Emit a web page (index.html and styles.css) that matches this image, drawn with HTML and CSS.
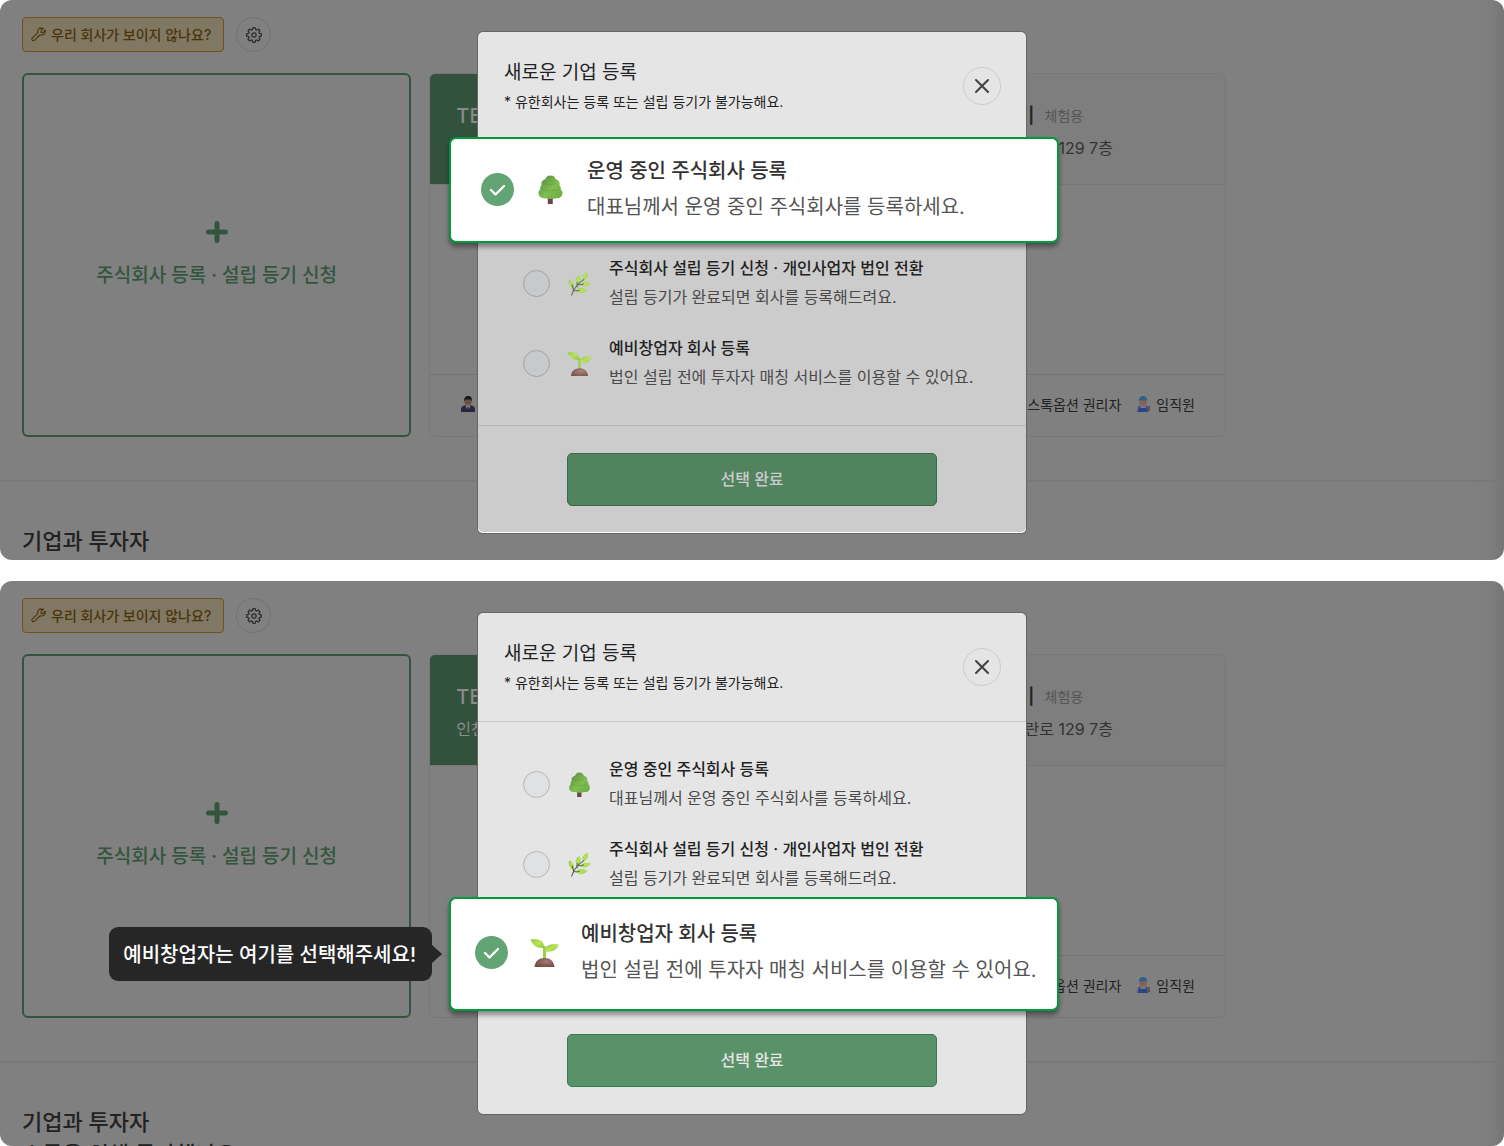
FILE: index.html
```
<!DOCTYPE html>
<html lang="ko">
<head>
    <meta charset="UTF-8">
    <meta name="viewport" content="width=device-width, initial-scale=1.0">
    <title>새로운 기업 등록</title>
    <link rel="stylesheet" href="styles.css">
</head>
<body>

<!-- Shared icons -->
<svg class="sprite" aria-hidden="true">
    <defs>
        <linearGradient id="treeFill" x1="0" y1="0" x2="1" y2="1">
            <stop offset="0" stop-color="#55873f"/>
            <stop offset="0.55" stop-color="#7fbd50"/>
            <stop offset="1" stop-color="#69aa42"/>
        </linearGradient>
        <linearGradient id="leafFill" x1="0" y1="0" x2="1" y2="1">
            <stop offset="0" stop-color="#93c63f"/>
            <stop offset="0.5" stop-color="#b5e457"/>
            <stop offset="1" stop-color="#8cc63f"/>
        </linearGradient>
        <radialGradient id="soilFill" cx="0.6" cy="0.4" r="0.7">
            <stop offset="0" stop-color="#a47a74"/>
            <stop offset="1" stop-color="#70483f"/>
        </radialGradient>
    </defs>
    <symbol id="tree" viewBox="0 0 32 32">
        <path d="M13 23h5.500v9H13z" fill="#6d4348"/>
        <path d="M16 .5c3.300 0 5.200 1.700 5.600 4.200 3.400.6 5.200 3.500 4.300 6.500 1.300 1.200 1.700 2.800 1.300 4.400 1.600 1.300 2.300 3.200 2 5.400-.5 3.300-3.300 5-7.200 4.600-3.800 1.200-8.200 1.200-12 0-3.900.4-6.700-1.300-7.200-4.600-.3-2.200.4-4.100 2-5.400-.4-1.600 0-3.200 1.300-4.400-.9-3 .9-5.900 4.300-6.500C10.800 2.200 12.700.5 16 .5z" fill="url(#treeFill)"/>
        <path d="M9 9c2.500 2 8 2.200 11.500.5M6 15.500c4 2.600 13 2.600 19 .3" fill="none" stroke="#558b3c" stroke-width="1" stroke-linecap="round" opacity=".4"/>
    </symbol>
    <symbol id="herb" viewBox="0 0 32 32">
        <g fill="url(#leafFill)">
            <path d="M20.500 12C18.500 7 20.500 3 26.500.5 28 6 26 10 20.500 12z"/>
            <path d="M13 16.500C10 12.500 10.500 8.500 15.500 5c3.500 4 2.500 8.500-2.500 11.500z"/>
            <path d="M8 23C3 20.500 1 16 3 10.500c5 2.500 7 7 5 12.500z"/>
            <path d="M17 18.500c2-4.500 7.500-6 14-4-3 5-8.500 7-14 4z"/>
            <path d="M11.500 26c2-4.500 8.500-5.500 14.500-2-4 5-10 5.500-14.500 2z"/>
        </g>
        <path d="M6 31C8.500 22 14 16 21.500 11M13 20.500c-.5-2.500-.5-4.500 0-6M8.500 26c0-3-.8-5.500-2-8M9.500 25c2 .3 4 .3 6 0M15 17.500c2.500.2 4 0 6-.8" fill="none" stroke="#56694b" stroke-width="1.400" stroke-linecap="round"/>
    </symbol>
    <symbol id="sprout" viewBox="0 0 32 32">
        <path d="M14.300 9h3.400v14h-3.400z" fill="#9bd04f"/>
        <path d="M.5 1.500h5.500c6 0 9.500 3 9.500 9.500C8 11.500 3.500 9.500.5 1.500z" fill="url(#leafFill)"/>
        <path d="M16.500 15c0-5.500 4-8 9-8h6c-1 6-6.500 9-15 8z" fill="url(#leafFill)"/>
        <path d="M5 32C5.500 25.500 10 22 16 22s10.500 3.500 11 10z" fill="url(#soilFill)"/>
    </symbol>
    <symbol id="wrench" viewBox="0 0 24 24">
        <path d="M16 3.300c1.300-.6 2.800-.8 4.200-.5l-3.700 3.700.2 2.800 2.800.2 3.200-3.700c.6 1.800.2 4-1.300 5.500-1.700 1.700-4.100 2.100-6.300 1.300L7 20.700c-1 1-2.500 1.100-3.500.2-1-1-.9-2.600.1-3.500L11.700 9.300c-.6-2.100.2-4.500 1.800-5.900.7-.6 1.600-1 2.500-1.100" transform="translate(-1.500 .5)" fill="none" stroke="currentColor" stroke-width="1.700" stroke-linejoin="round" stroke-linecap="round"/>
    </symbol>
    <symbol id="gear" viewBox="0 0 24 24">
        <path d="M10.300 2h3.400l.7 2.800 1.600.7 2.500-1.500 2.400 2.400-1.500 2.500.7 1.600 2.800.7v3.400l-2.800.7-.7 1.600 1.500 2.500-2.400 2.400-2.500-1.500-1.600.7-.7 2.800h-3.400l-.7-2.800-1.600-.7-2.500 1.500-2.400-2.400 1.500-2.500-.7-1.600L1 14.600v-3.400l2.900-.7.7-1.600-1.500-2.500L5.500 4 8 5.500l1.600-.7z" transform="translate(0 -.9)" fill="none" stroke="currentColor" stroke-width="1.900" stroke-linejoin="round"/>
        <circle cx="12" cy="12" r="3.200" fill="none" stroke="currentColor" stroke-width="1.900"/>
    </symbol>
    <symbol id="plus" viewBox="0 0 24 24">
        <path d="M12 3.500v17M3.500 12h17" stroke="currentColor" stroke-width="5" stroke-linecap="round"/>
    </symbol>
    <symbol id="close" viewBox="0 0 24 24">
        <path d="M4 4l16 16M20 4L4 20" stroke="currentColor" stroke-width="2.800" stroke-linecap="round"/>
    </symbol>
    <symbol id="manager" viewBox="0 0 16 16">
        <path d="M1 16v-2.500c0-3 2-4.500 7-4.500s7 1.500 7 4.500V16z" fill="#2b2442"/>
        <path d="M6 9h4l.5 2L8 14l-2.500-3z" fill="#777"/>
        <path d="M7.500 11h1l.5 5H7z" fill="#222"/>
        <circle cx="8" cy="5.500" r="3.600" fill="#6b4f44"/>
        <path d="M4 5.500C3.800 2 5.300 0 8.200 0S12.200 2 12 5.500L10.500 3.500h-5z" fill="#1b1715"/>
    </symbol>
    <symbol id="worker" viewBox="0 0 16 16">
        <path d="M1 16v-2.500c0-3 2-4.500 7-4.500s7 1.500 7 4.500V16z" fill="#79777c"/>
        <path d="M3.800 9.800h1.400V12h5.600V9.800h1.400l.8 6.200H2.500z" fill="#294586"/>
        <circle cx="8" cy="6" r="3.600" fill="#87604f"/>
        <path d="M3.800 4.500C3.800 1.500 5.500 0 8 0s4.200 1.500 4.200 4.500z" fill="#2f6288"/>
        <path d="M14 10v5" stroke="#704c40" stroke-width="2"/>
    </symbol>
</svg>

<!-- Step 1: registered company -->
<section class="panel">
    <div class="dashboard">
        <div class="toolbar">
            <button type="button" class="help-button"><svg class="icon-wrench"><use href="#wrench"/></svg>우리 회사가 보이지 않나요?</button>
            <button type="button" class="round-button" aria-label="설정"><svg class="icon-gear"><use href="#gear"/></svg></button>
        </div>
        <div class="cards">
            <button type="button" class="card add-card">
                <svg class="icon-plus"><use href="#plus"/></svg>
                주식회사 등록 · 설립 등기 신청
            </button>
            <article class="card">
                <div class="card-header green">
                    <div class="card-title">TEST</div>
                    <div class="card-address">인천</div>
                </div>
                <div class="card-footer">
                    <span class="role"><svg class="icon-role"><use href="#manager"/></svg></span>
                </div>
            </article>
            <article class="card">
                <div class="card-header">
                    <div class="card-title">테스트 주식회사대기 <span class="tag">체험용</span></div>
                    <div class="card-address">서울특별시 강남구, 테헤란로 129 7층</div>
                </div>
                <div class="card-footer end">
                    <span class="role">스톡옵션 권리자</span>
                    <span class="role"><svg class="icon-role"><use href="#worker"/></svg>임직원</span>
                </div>
            </article>
        </div>
        <div class="investors">
            <h2>기업과 투자자</h2>
        </div>
    </div>

    <div class="modal dimmed" role="dialog" aria-label="새로운 기업 등록">
        <header class="modal-header">
            <div>
                <h1>새로운 기업 등록</h1>
                <p>* 유한회사는 등록 또는 설립 등기가 불가능해요.</p>
            </div>
            <button type="button" class="close-button" aria-label="닫기"><svg class="icon-close"><use href="#close"/></svg></button>
        </header>
        <div class="modal-body">
            <div class="slot">
                <label class="spotlight spotlight-first">
                    <input type="radio" name="type1" checked>
                    <svg class="emoji"><use href="#tree"/></svg>
                    <span class="option-text"><strong>운영 중인 주식회사 등록</strong><span>대표님께서 운영 중인 주식회사를 등록하세요.</span></span>
                </label>
            </div>
            <label class="option">
                <input type="radio" name="type1">
                <svg class="emoji"><use href="#herb"/></svg>
                <span class="option-text"><strong>주식회사 설립 등기 신청 · 개인사업자 법인 전환</strong><span>설립 등기가 완료되면 회사를 등록해드려요.</span></span>
            </label>
            <label class="option">
                <input type="radio" name="type1">
                <svg class="emoji"><use href="#sprout"/></svg>
                <span class="option-text"><strong>예비창업자 회사 등록</strong><span>법인 설립 전에 투자자 매칭 서비스를 이용할 수 있어요.</span></span>
            </label>
        </div>
        <footer class="modal-footer">
            <button type="button" class="submit-button">선택 완료</button>
        </footer>
    </div>
</section>

<!-- Step 2: company to be founded -->
<section class="panel">
    <div class="dashboard">
        <div class="toolbar">
            <button type="button" class="help-button"><svg class="icon-wrench"><use href="#wrench"/></svg>우리 회사가 보이지 않나요?</button>
            <button type="button" class="round-button" aria-label="설정"><svg class="icon-gear"><use href="#gear"/></svg></button>
        </div>
        <div class="cards">
            <button type="button" class="card add-card">
                <svg class="icon-plus"><use href="#plus"/></svg>
                주식회사 등록 · 설립 등기 신청
            </button>
            <article class="card">
                <div class="card-header green">
                    <div class="card-title">TEST</div>
                    <div class="card-address">인천</div>
                </div>
                <div class="card-footer">
                    <span class="role"><svg class="icon-role"><use href="#manager"/></svg></span>
                </div>
            </article>
            <article class="card">
                <div class="card-header">
                    <div class="card-title">테스트 주식회사대기 <span class="tag">체험용</span></div>
                    <div class="card-address">서울특별시 강남구, 테헤란로 129 7층</div>
                </div>
                <div class="card-footer end">
                    <span class="role">스톡옵션 권리자</span>
                    <span class="role"><svg class="icon-role"><use href="#worker"/></svg>임직원</span>
                </div>
            </article>
        </div>
        <div class="investors">
            <h2>기업과 투자자</h2>
            <h2>소통을 위해 투자했나요?</h2>
        </div>
    </div>

    <div class="modal" role="dialog" aria-label="새로운 기업 등록">
        <header class="modal-header">
            <div>
                <h1>새로운 기업 등록</h1>
                <p>* 유한회사는 등록 또는 설립 등기가 불가능해요.</p>
            </div>
            <button type="button" class="close-button" aria-label="닫기"><svg class="icon-close"><use href="#close"/></svg></button>
        </header>
        <div class="modal-body">
            <label class="option">
                <input type="radio" name="type2">
                <svg class="emoji"><use href="#tree"/></svg>
                <span class="option-text"><strong>운영 중인 주식회사 등록</strong><span>대표님께서 운영 중인 주식회사를 등록하세요.</span></span>
            </label>
            <label class="option">
                <input type="radio" name="type2">
                <svg class="emoji"><use href="#herb"/></svg>
                <span class="option-text"><strong>주식회사 설립 등기 신청 · 개인사업자 법인 전환</strong><span>설립 등기가 완료되면 회사를 등록해드려요.</span></span>
            </label>
            <div class="slot">
                <label class="spotlight spotlight-last">
                    <input type="radio" name="type2" checked>
                    <svg class="emoji"><use href="#sprout"/></svg>
                    <span class="option-text"><strong>예비창업자 회사 등록</strong><span>법인 설립 전에 투자자 매칭 서비스를 이용할 수 있어요.</span></span>
                    <span class="tooltip" role="tooltip">예비창업자는 여기를 선택해주세요!</span>
                </label>
            </div>
        </div>
        <footer class="modal-footer">
            <button type="button" class="submit-button">선택 완료</button>
        </footer>
    </div>
</section>

</body>
</html>
```
FILE: styles.css
```
* {
    box-sizing: border-box;
}
body {
    display: grid;
    grid-template-rows: 560fr 565fr;
    gap: 21px;
    height: 100vh;
    margin: 0;
    background-color: #fff;
    color: #222;
    font-family: Inter, "Noto Sans CJK KR", sans-serif;
    font-size: 16px;
}
button {
    font: inherit;
    cursor: pointer;
}
h1, h2, p {
    margin: 0;
}
.sprite {
    position: absolute;
    width: 0;
    height: 0;
}
.panel {
    position: relative;
    min-height: 0;
    overflow: hidden;
    border-radius: 12px;
    background: linear-gradient(to left, #757575, #7d7d7d 12px, #808080 30px);
}

/* Dashboard behind the dialog */
.toolbar {
    display: flex;
    gap: 12px;
    padding: 17px 22px 21px;
}
.help-button {
    display: flex;
    align-items: center;
    gap: 4px;
    height: 35px;
    padding: 0 12px 2px 8px;
    background-color: #807863;
    border: 1px solid #70531a;
    border-radius: 4px;
    color: #49350c;
    font-size: 14px;
    font-weight: 500;
}
.round-button {
    display: flex;
    align-items: center;
    justify-content: center;
    width: 35px;
    height: 35px;
    padding: 0;
    background: none;
    border: 1px solid #727272;
    border-radius: 50%;
    color: #2c2c2c;
}
.icon-wrench,
.icon-gear {
    width: 16px;
    height: 16px;
}
.cards {
    display: grid;
    grid-template-columns: repeat(3, 1fr);
    gap: 18px;
    max-width: 1248px;
    padding: 0 22px;
}
.card {
    display: flex;
    flex-direction: column;
    min-height: 364px;
    overflow: hidden;
    background: none;
    border: 1px solid #787878;
    border-radius: 6px;
}
.add-card {
    align-items: center;
    justify-content: center;
    gap: 16px;
    padding: 0 0 4px;
    border: 2px solid #33553e;
    color: #33553e;
    font-size: 19px;
    font-weight: 500;
}
.icon-plus {
    width: 24px;
    height: 24px;
}
.card-header {
    height: 111px;
    padding: 27px 26px;
    background-color: #7e7e7e;
    border-bottom: 1px solid #777;
    white-space: nowrap;
}
.card-header.green {
    background-color: #33523d;
    color: #8a8a8a;
}
.card-title {
    display: flex;
    align-items: center;
    gap: 10px;
    font-size: 20px;
    font-weight: 500;
    line-height: 30px;
}
.card-address {
    color: #333;
    line-height: 34px;
}
.green .card-address {
    color: #8a8a8a;
}
.tag {
    color: #565656;
    font-size: 14px;
    font-weight: 400;
}
.card-footer {
    display: flex;
    align-items: center;
    gap: 14px;
    height: 62px;
    margin-top: auto;
    padding: 0 30px 3px;
    border-top: 1px solid #747474;
    font-size: 14px;
}
.card-footer.end {
    justify-content: flex-end;
}
.role {
    display: flex;
    align-items: center;
    gap: 5px;
    white-space: nowrap;
}
.icon-role {
    width: 16px;
    height: 16px;
}
.investors {
    margin-top: 43px;
    padding: 43px 22px;
    border-top: 2px solid #787878;
}
.investors h2 {
    font-size: 22px;
    font-weight: 500;
    line-height: 32px;
}

/* Dialog */
.modal {
    position: absolute;
    top: 32px;
    left: 50%;
    width: 548px;
    transform: translateX(-50%);
    background-color: #e5e5e5;
    border-radius: 5px;
    box-shadow: 0 0 0 1px #666;
}
.modal-header {
    display: flex;
    align-items: center;
    justify-content: space-between;
    padding: 25px 25px 25px 26px;
    border-bottom: 1px solid #c6c8ca;
}
.modal-header h1 {
    font-size: 19px;
    font-weight: 400;
    line-height: 32px;
}
.modal-header p {
    font-size: 14px;
    line-height: 26px;
}
.close-button {
    display: flex;
    align-items: center;
    justify-content: center;
    width: 38px;
    height: 38px;
    padding: 0;
    background: none;
    border: 1px solid #c9cdd1;
    border-radius: 50%;
    color: #444;
}
.icon-close {
    width: 18px;
    height: 18px;
}
.modal-body {
    display: flex;
    flex-direction: column;
    gap: 22px;
    padding: 33px 0;
}
.option,
.spotlight {
    display: flex;
    align-items: center;
    white-space: nowrap;
    cursor: pointer;
}
.option {
    gap: 17px;
    padding: 0 45px;
}
.option input,
.spotlight input {
    flex: none;
    width: 27px;
    height: 27px;
    margin: 0;
    appearance: none;
    background-color: #dfe1e3;
    border: 1px solid #b3b5b7;
    border-radius: 50%;
}
.emoji {
    flex: none;
    width: 25px;
    height: 25px;
}
.option-text {
    display: flex;
    flex-direction: column;
    color: #4a4a4a;
    line-height: 29px;
}
.option-text strong {
    color: #222;
    font-weight: 500;
}
.modal-footer {
    padding: 27px 89px;
    border-top: 1px solid #c6c8ca;
    border-radius: 0 0 5px 5px;
}
.submit-button {
    width: 100%;
    height: 53px;
    padding: 0 0 4px;
    background-color: #599269;
    border: 1px solid #3c7950;
    border-radius: 5px;
    color: #e5e5e5;
    font-weight: 500;
}

/* First dialog is darker below the highlighted option */
.dimmed .modal-body,
.dimmed .modal-footer {
    background-color: #ccc;
}
.dimmed .modal-footer {
    border-top-color: #b5b6b7;
    box-shadow: inset 0 -1px #fff;
}
.dimmed .option input {
    background-color: #c7c9cb;
    border-color: #a2a3a4;
}
.dimmed .option .emoji {
    opacity: .9;
}
.dimmed .submit-button {
    background-color: #50835e;
    border-color: #386b48;
    color: #ccc;
}

/* Highlighted option, wider than the dialog */
.slot {
    position: relative;
    height: 58px;
}
.spotlight {
    position: absolute;
    left: -29px;
    right: -33px;
    gap: 22px;
    background-color: #fff;
    border: 2px solid #00993b;
    border-radius: 7px;
    box-shadow: 0 4px 5px rgba(0, 0, 0, 0.4);
    font-size: 20px;
}
.spotlight-first {
    top: -37px;
    padding: 14px 30px 16px;
}
.spotlight-last {
    top: -18px;
    padding: 17px 24px 21px;
}
.spotlight input {
    width: 33px;
    height: 33px;
    background: #62a474 url("data:image/svg+xml,%3Csvg xmlns='http://www.w3.org/2000/svg' viewBox='0 0 33 33'%3E%3Cpath d='M10 17l4.500 4.500 8.500-8.500' fill='none' stroke='white' stroke-width='2.400' stroke-linecap='round' stroke-linejoin='round'/%3E%3C/svg%3E") center / 33px 33px;
    border: none;
}
.spotlight .emoji {
    width: 29px;
    height: 29px;
}
.spotlight .option-text {
    color: #555;
    line-height: 36px;
}
.spotlight .option-text strong {
    color: #333;
}
.tooltip {
    position: absolute;
    top: 28px;
    right: calc(100% + 19px);
    padding: 13px 16px 11px 14px;
    background-color: #262626;
    border-radius: 9px;
    color: #fff;
    font-weight: 500;
    line-height: 30px;
}
.tooltip::after {
    content: "";
    position: absolute;
    top: 18px;
    left: 100%;
    border: solid transparent;
    border-width: 9px 0 9px 10px;
    border-left-color: #262626;
}
```
